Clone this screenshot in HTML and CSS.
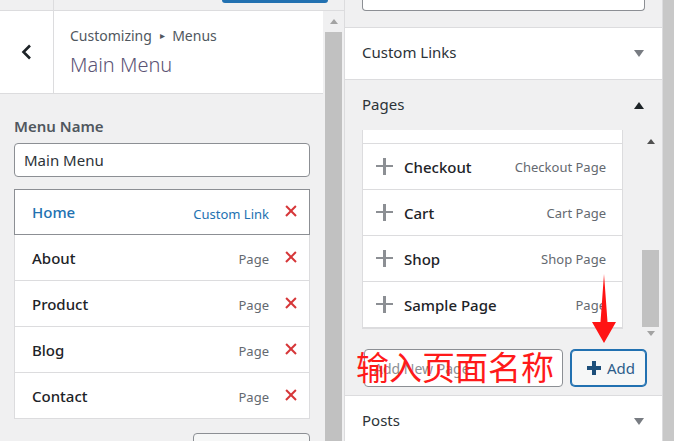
FILE: index.html
```html
<!DOCTYPE html>
<html lang="en">

<head>
    <meta charset="UTF-8">
    <meta name="viewport" content="width=device-width, initial-scale=1.0">
    <title>Customizing Menus</title>
    <link rel="stylesheet" href="styles.css">
</head>

<body>
    <div id="screen">
        <div id="left-col">
            <div class="top-strip">
                <div class="strip-back"></div>
                <div class="strip-main"><span class="publish-btn"></span></div>
            </div>
            <div class="left-body">
                <div id="sidebar">
                    <div class="panel-header">
                        <div class="back-btn">
                            <svg width="12" height="16" viewBox="0 0 12 16">
                                <polyline points="9,1.5 2.5,8 9,14.5" fill="none" stroke="#1d2327" stroke-width="2.6" />
                            </svg>
                        </div>
                        <div class="panel-title">
                            <p class="crumbs">Customizing <span class="crumb-sep">&#9656;</span> Menus</p>
                            <h1>Main Menu</h1>
                        </div>
                    </div>

                    <div class="menu-settings">
                        <label class="field-label" for="menuName">Menu Name</label>
                        <input type="text" id="menuName" class="text-input" value="Main Menu">

                        <ul class="menu-items">
                            <li class="menu-item active"><span class="item-name">Home</span><span class="item-type">Custom Link</span><span class="remove"></span></li>
                            <li class="menu-item"><span class="item-name">About</span><span class="item-type">Page</span><span class="remove"></span></li>
                            <li class="menu-item"><span class="item-name">Product</span><span class="item-type">Page</span><span class="remove"></span></li>
                            <li class="menu-item"><span class="item-name">Blog</span><span class="item-type">Page</span><span class="remove"></span></li>
                            <li class="menu-item"><span class="item-name">Contact</span><span class="item-type">Page</span><span class="remove"></span></li>
                        </ul>

                        <div class="bottom-actions">
                            <button class="ghost-btn"></button>
                        </div>
                    </div>
                </div>
                <div class="scrollbar left-scroll">
                    <span class="arrow-up"></span>
                    <div class="thumb"></div>
                </div>
            </div>
        </div>

        <div id="right-col">
            <div class="search-area">
                <div class="search-box"></div>
            </div>

            <div class="section closed">
                <h3>Custom Links</h3>
                <span class="toggle down"></span>
            </div>

            <div class="section open">
                <div class="section-head">
                    <h3>Pages</h3>
                    <span class="toggle up"></span>
                </div>

                <div class="pages-box">
                    <ul class="pages-list">
                        <li class="page-row clipped"><span class="plus"></span><span class="page-name">My account</span><span class="page-type">My Account Page</span></li>
                        <li class="page-row"><span class="plus"></span><span class="page-name">Checkout</span><span class="page-type">Checkout Page</span></li>
                        <li class="page-row"><span class="plus"></span><span class="page-name">Cart</span><span class="page-type">Cart Page</span></li>
                        <li class="page-row"><span class="plus"></span><span class="page-name">Shop</span><span class="page-type">Shop Page</span></li>
                        <li class="page-row"><span class="plus"></span><span class="page-name">Sample Page</span><span class="page-type">Page</span></li>
                    </ul>
                    <div class="scrollbar inner-scroll">
                        <span class="arrow-up dark"></span>
                        <div class="track"><div class="thumb"></div></div>
                        <span class="arrow-down"></span>
                    </div>
                </div>

                <div class="new-page">
                    <input type="text" class="text-input new-input" placeholder="Add New Page">
                    <button class="add-btn"><span class="add-plus"></span>Add</button>
                    <span class="note">输入页面名称</span>
                    <svg class="red-arrow" width="30" height="72" viewBox="0 0 30 72">
                        <polygon points="14,0 17.5,48 26,48 14,69 2,48 10.5,48" fill="#ff1414" />
                    </svg>
                </div>
            </div>

            <div class="section closed">
                <h3>Posts</h3>
                <span class="toggle down"></span>
            </div>
        </div>

        <div class="outer-scroll"></div>
    </div>
</body>

</html>
```

FILE: styles.css
```css
* {
    padding: 0;
    margin: 0;
    box-sizing: border-box;
    font-family: 'Noto Sans', sans-serif;
}

body {
    width: 674px;
    height: 441px;
    overflow: hidden;
    background-color: #f0f0f1;
    color: #1d2327;
}

#screen {
    display: flex;
    height: 441px;
}

/* left column */
#left-col {
    width: 345px;
    flex-shrink: 0;
    border-right: 1px solid #dcdcde;
    display: flex;
    flex-direction: column;
}

.top-strip {
    height: 11px;
    flex-shrink: 0;
    display: flex;
    border-bottom: 1px solid #dcdcde;
}

.strip-back {
    width: 54px;
    border-right: 1px solid #dcdcde;
}

.strip-main {
    flex: 1;
    padding-left: 168px;
}

.publish-btn {
    display: block;
    width: 106px;
    height: 3px;
    background-color: #2271b1;
    border-radius: 0 0 4px 4px;
}

.left-body {
    flex: 1;
    display: flex;
    min-height: 0;
}

#sidebar {
    width: 323px;
    flex-shrink: 0;
}

.panel-header {
    display: flex;
    height: 83px;
    background-color: #ffffff;
    border-bottom: 1px solid #dcdcde;
}

.back-btn {
    width: 54px;
    border-right: 1px solid #dcdcde;
    display: flex;
    align-items: center;
    justify-content: center;
    padding-left: 1px;
}

.panel-title {
    padding: 15px 16px;
}

.crumbs {
    font-size: 14px;
    color: #50575e;
    line-height: 20px;
}

.crumb-sep {
    font-size: 10px;
    margin: 0 4px;
    position: relative;
    top: -2px;
}

h1 {
    font-size: 20px;
    font-weight: 300;
    color: #5b5475;
    line-height: 28px;
    margin-top: 4px;
}

.menu-settings {
    padding: 22px 13px 0 14px;
}

.field-label {
    display: block;
    font-size: 15px;
    font-weight: 600;
    color: #50575e;
    line-height: 20px;
}

.text-input {
    display: block;
    width: 100%;
    height: 34px;
    margin-top: 7px;
    padding: 0 9px;
    border: 1px solid #8c8f94;
    border-radius: 4px;
    font-size: 15px;
    color: #2c3338;
    outline: none;
    background-color: #ffffff;
}

.menu-items {
    list-style: none;
    margin-top: 12px;
}

.menu-item {
    display: flex;
    align-items: center;
    height: 46px;
    padding: 0 12px 0 17px;
    background-color: #ffffff;
    border: 1px solid #dcdcde;
    border-top: none;
}

.menu-item.active {
    border: 1px solid #8c8f94;
}

.item-name {
    flex: 1;
    font-size: 15px;
    font-weight: 500;
    color: #1d2327;
}

.active .item-name,
.active .item-type {
    color: #2271b1;
}

.item-type {
    font-size: 13px;
    color: #646970;
    margin-top: 3px;
}

.remove {
    width: 12px;
    height: 12px;
    margin-left: 16px;
    position: relative;
    top: -1px;
}

.remove::before,
.remove::after {
    content: "";
    position: absolute;
    left: -1px;
    top: 5px;
    width: 14px;
    height: 2.2px;
    background-color: #d63638;
    transform: rotate(45deg);
}

.remove::after {
    transform: rotate(-45deg);
}

.bottom-actions {
    display: flex;
    justify-content: flex-end;
    margin-top: 14px;
}

.ghost-btn {
    width: 117px;
    height: 32px;
    border: 1px solid #8c8f94;
    border-radius: 4px;
    background-color: #f6f7f7;
}

/* fake scrollbars */
.scrollbar {
    display: flex;
    flex-direction: column;
    align-items: center;
}

.left-scroll {
    width: 21px;
    padding: 0 2px 0 2px;
}

.left-scroll .arrow-up {
    margin: 8px 0 8px;
}

.left-scroll .thumb {
    flex: 1;
    width: 17px;
    background-color: #c1c1c1;
}

.arrow-up,
.arrow-down {
    width: 0;
    height: 0;
    border-left: 4.5px solid transparent;
    border-right: 4.5px solid transparent;
}

.arrow-up {
    border-bottom: 5px solid #a3a3a3;
}

.arrow-up.dark {
    border-bottom-color: #505050;
}

.arrow-down {
    border-top: 5px solid #a3a3a3;
}

.outer-scroll {
    width: 12px;
    flex-shrink: 0;
    background-color: #c8c8c8;
    border-left: 1px solid #dcdcde;
}

/* right column */
#right-col {
    flex: 1;
    display: flex;
    flex-direction: column;
    min-width: 0;
}

#right-col > * {
    flex-shrink: 0;
}

.search-area {
    height: 28px;
    padding: 0 17px;
    border-bottom: 1px solid #dcdcde;
}

.search-box {
    height: 11px;
    background-color: #ffffff;
    border: 1px solid #8c8f94;
    border-top: none;
    border-radius: 0 0 4px 4px;
}

.section {
    border-bottom: 1px solid #dcdcde;
}

.section.closed {
    display: flex;
    align-items: center;
    justify-content: space-between;
    height: 52px;
    padding: 0 17px;
    background-color: #ffffff;
}

.section h3 {
    font-size: 15px;
    font-weight: 400;
    color: #2c3338;
    margin-bottom: 4px;
}

.section-head {
    display: flex;
    align-items: center;
    justify-content: space-between;
    height: 50px;
    padding: 0 17px;
}

.section-head h3 {
    margin-bottom: 2px;
}

.toggle {
    width: 0;
    height: 0;
    border-left: 5.5px solid transparent;
    border-right: 5.5px solid transparent;
    margin-right: 1px;
}

.toggle.down {
    border-top: 7px solid #787c82;
}

.toggle.up {
    border-bottom: 7px solid #1d2327;
}

.pages-box {
    display: flex;
    margin: 0 2px 0 17px;
    height: 210px;
}

.pages-list {
    list-style: none;
    width: 261px;
    height: 199px;
    background-color: #ffffff;
    border: 1px solid #dcdcde;
    border-top: none;
    overflow: hidden;
}

.page-row {
    display: flex;
    align-items: center;
    height: 46px;
    padding: 0 16px 0 13px;
    border-bottom: 1px solid #dcdcde;
}

.page-row.clipped {
    margin-top: -32px;
}

.plus {
    width: 17px;
    height: 17px;
    position: relative;
    margin-right: 11px;
}

.plus::before,
.plus::after {
    content: "";
    position: absolute;
    background-color: #8c8f94;
}

.plus::before {
    left: 0;
    top: 7px;
    width: 17px;
    height: 2.4px;
}

.plus::after {
    left: 7.3px;
    top: 0;
    width: 2.4px;
    height: 17px;
}

.page-name {
    flex: 1;
    font-size: 15px;
    font-weight: 500;
}

.page-type {
    font-size: 13px;
    color: #646970;
}

.inner-scroll {
    width: 18px;
    margin-left: 19px;
    padding-top: 9px;
}

.inner-scroll .track {
    flex: 1;
    width: 18px;
    display: flex;
    flex-direction: column;
    justify-content: flex-end;
    padding: 6px 0 4px;
}

.inner-scroll .thumb {
    width: 17px;
    height: 77px;
    background-color: #c1c1c1;
}

.inner-scroll .arrow-down {
    margin-bottom: 4px;
}

.new-page {
    display: flex;
    align-items: center;
    gap: 8px;
    padding: 9px 16px 8px 19px;
    position: relative;
}

.new-input {
    width: 199px;
    height: 38px;
    margin-top: 0;
    font-size: 14px;
}

.new-input::placeholder {
    color: #8c8f94;
}

.add-btn {
    display: flex;
    align-items: center;
    gap: 6px;
    width: 76px;
    height: 36px;
    padding-left: 15px;
    border: 1px solid #2271b1;
    box-shadow: 0 0 0 1px #2271b1;
    border-radius: 4px;
    background-color: #f6f7f7;
    font-size: 15px;
    color: #2c5d8a;
}

.add-plus {
    width: 14px;
    height: 14px;
    position: relative;
}

.add-plus::before,
.add-plus::after {
    content: "";
    position: absolute;
    background-color: #1d4f7a;
}

.add-plus::before {
    left: 0;
    top: 5px;
    width: 14px;
    height: 4px;
}

.add-plus::after {
    left: 5px;
    top: 0;
    width: 4px;
    height: 14px;
}

.note {
    position: absolute;
    left: 11px;
    top: 6px;
    font-family: 'Noto Sans CJK SC', sans-serif;
    font-size: 33px;
    line-height: 40px;
    color: #ff1a1a;
}

.red-arrow {
    position: absolute;
    left: 245px;
    top: -66px;
}
```
